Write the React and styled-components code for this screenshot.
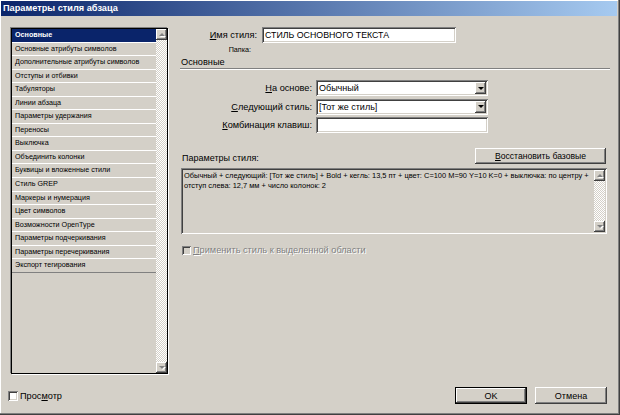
import styled, { createGlobalStyle } from 'styled-components';

const GlobalStyle = createGlobalStyle`
  html, body { margin: 0; padding: 0; background: #d4d0c8; }
  body { font-family: "Liberation Sans", Arial, sans-serif; color: #000; }
`;

const raised = `box-shadow: inset -1px -1px 0 #404040, inset 1px 1px 0 #fff, inset -2px -2px 0 #808080, inset 2px 2px 0 #d4d0c8;`;
const sunken = `box-shadow: inset 1px 1px 0 #808080, inset -1px -1px 0 #fff, inset 2px 2px 0 #404040, inset -2px -2px 0 #d4d0c8;`;

const Window = styled.div`
  width: 620px;
  height: 415px;
  box-sizing: border-box;
  padding: 1px 3px 3px 1px;
  background: #d4d0c8;
  box-shadow: inset -1px -1px 0 #404040, inset -2px -2px 0 #808080, inset 1px 1px 0 #fff;
  display: flex;
  flex-direction: column;
`;

const TitleBar = styled.div`
  height: 15px;
  padding-left: 2px;
  background: linear-gradient(to right, #0a246a, #a6caf0);
  color: #fff;
  font-weight: bold;
  font-size: 9.2px;
  line-height: 15px;
  white-space: nowrap;
`;

const Body = styled.div`
  display: flex;
  padding: 12px 0 0 10px;
`;

const ListBox = styled.div`
  width: 157px;
  height: 346px;
  box-sizing: border-box;
  border: 1px solid #000;
  box-shadow: -1px -1px 0 #808080, 1px 1px 0 #fff;
  background: #d4d0c8;
  display: flex;
`;

const Items = styled.div`
  flex: 1;
  display: flex;
  flex-direction: column;
  min-width: 0;
`;

const Item = styled.div`
  height: 13.55px;
  flex-shrink: 0;
  box-sizing: border-box;
  padding-left: 3px;
  border-bottom: 1px solid ${p => (p.$last ? '#808080' : '#fff')};
  background: ${p => (p.$selected ? '#0a246a' : 'transparent')};
  color: ${p => (p.$selected ? '#fff' : '#000')};
  font-weight: ${p => (p.$selected ? 'bold' : 'normal')};
  font-size: 7.2px;
  line-height: 12.5px;
  white-space: nowrap;
  overflow: hidden;
`;

const ScrollBar = styled.div`
  width: 11px;
  flex-shrink: 0;
  display: flex;
  flex-direction: column;
  justify-content: space-between;
  background: repeating-conic-gradient(#fff 0 25%, #d4d0c8 0 50%) 0 0 / 2px 2px;
`;

const ArrowBtn = styled.div`
  width: ${p => p.$w || 11}px;
  height: ${p => p.$h || 11}px;
  flex-shrink: 0;
  background: #d4d0c8;
  ${raised}
  display: flex;
  align-items: center;
  justify-content: center;
`;

const Arrow = styled.span`
  width: 0;
  height: 0;
  border-left: 3px solid transparent;
  border-right: 3px solid transparent;
  ${p => (p.$up ? 'border-bottom' : 'border-top')}: 3px solid ${p => (p.$off ? '#808080' : '#000')};
  filter: ${p => (p.$off ? 'drop-shadow(1px 1px 0 #fff)' : 'none')};
`;

const Content = styled.div`
  width: 430px;
  margin-left: 12px;
  margin-top: -1px;
  display: flex;
  flex-direction: column;
  font-size: 9px;
`;

const NameGrid = styled.div`
  display: grid;
  grid-template-columns: 77px 194px;
  column-gap: 5px;
  align-items: center;
`;

const Label = styled.div`
  text-align: right;
  white-space: nowrap;
  font-size: 9.2px;
`;

const Field = styled.div`
  height: 16px;
  box-sizing: border-box;
  background: #fff;
  ${sunken}
  padding: 0 3px;
  font-size: ${p => p.$size || 9}px;
  line-height: 16px;
  white-space: nowrap;
  display: flex;
  align-items: center;
  justify-content: space-between;
`;

const SelectBtn = styled(ArrowBtn)`
  margin-right: -1px;
`;

const Folder = styled.div`
  grid-column: 1;
  margin-top: 1px;
  height: 12px;
  line-height: 12px;
  padding-right: 6px;
  text-align: right;
  font-size: 7.2px;
`;

const SectionTitle = styled.div`
  height: 12px;
  line-height: 12px;
  padding-left: 1px;
  font-size: 9.2px;
`;

const Divider = styled.div`
  height: 0;
  border-top: 1px solid #808080;
  border-bottom: 1px solid #fff;
`;

const FormGrid = styled.div`
  margin-top: 10px;
  display: grid;
  grid-template-columns: 132px 172px;
  column-gap: 4px;
  row-gap: 2.5px;
  align-items: center;
`;

const ParamsHead = styled.div`
  margin-top: 15px;
  display: flex;
  justify-content: space-between;
  align-items: flex-end;
  padding-right: 4px;
`;

const ParamsLabel = styled.div`
  padding-left: 2px;
  line-height: 12px;
`;

const Button = styled.div`
  width: ${p => p.$w}px;
  height: ${p => p.$h || 16}px;
  box-sizing: border-box;
  background: #d4d0c8;
  ${p => (p.$default
    ? 'border: 1px solid #000; box-shadow: inset -1px -1px 0 #404040, inset 1px 1px 0 #fff, inset -2px -2px 0 #808080;'
    : raised)}
  display: flex;
  align-items: center;
  justify-content: center;
  font-size: ${p => p.$size || 9}px;
  white-space: nowrap;
`;

const TextBox = styled.div`
  margin-top: 4px;
  margin-left: 1px;
  width: 426px;
  height: 66px;
  box-sizing: border-box;
  padding: 2px;
  ${sunken}
  display: flex;
`;

const TextBody = styled.div`
  flex: 1;
  padding: 1px 0 0 1px;
  font-size: 7.45px;
  line-height: 10px;
  white-space: nowrap;
  overflow: hidden;
`;

const CheckRow = styled.div`
  margin-top: 11px;
  padding-left: 2px;
  display: flex;
  align-items: center;
  gap: 2px;
  color: ${p => (p.$disabled ? '#808080' : '#000')};
  text-shadow: ${p => (p.$disabled ? '1px 1px 0 #fff' : 'none')};
  font-size: 9.2px;
`;

const CheckBox = styled.span`
  width: ${p => p.$size}px;
  height: ${p => p.$size}px;
  box-sizing: border-box;
  background: ${p => (p.$disabled ? '#d4d0c8' : '#fff')};
  ${sunken}
  flex-shrink: 0;
`;

const Footer = styled.div`
  margin-top: 13px;
  height: 17px;
  padding: 0 10px 0 7px;
  display: flex;
  align-items: center;
  gap: 8px;
`;

const Preview = styled(CheckRow)`
  margin-top: 0;
  padding-left: 0;
  margin-right: auto;
`;

const items = [
  'Основные',
  'Основные атрибуты символов',
  'Дополнительные атрибуты символов',
  'Отступы и отбивки',
  'Табуляторы',
  'Линии абзаца',
  'Параметры удержания',
  'Переносы',
  'Выключка',
  'Объединить колонки',
  'Буквицы и вложенные стили',
  'Стиль GREP',
  'Маркеры и нумерация',
  'Цвет символов',
  'Возможности OpenType',
  'Параметры подчеркивания',
  'Параметры перечеркивания',
  'Экспорт тегирования',
];

const Scroll = () => (
  <ScrollBar>
    <ArrowBtn><Arrow $up $off /></ArrowBtn>
    <ArrowBtn><Arrow $off /></ArrowBtn>
  </ScrollBar>
);

const Select = ({ children }) => (
  <Field>
    <span>{children}</span>
    <SelectBtn $w={11} $h={12}><Arrow /></SelectBtn>
  </Field>
);

export default function App() {
  return (
    <>
      <GlobalStyle />
      <Window>
        <TitleBar>Параметры стиля абзаца</TitleBar>
        <Body>
          <ListBox>
            <Items>
              {items.map((it, i) => (
                <Item key={it} $selected={i === 0} $last={i === items.length - 1}>{it}</Item>
              ))}
            </Items>
            <Scroll />
          </ListBox>

          <Content>
            <NameGrid>
              <Label><u>И</u>мя стиля:</Label>
              <Field $size={8.8}>СТИЛЬ ОСНОВНОГО ТЕКСТА</Field>
              <Folder>Папка:</Folder>
            </NameGrid>
            <SectionTitle>Основные</SectionTitle>
            <Divider />

            <FormGrid>
              <Label><u>Н</u>а основе:</Label>
              <Select>Обычный</Select>
              <Label><u>С</u>ледующий стиль:</Label>
              <Select>[Тот же стиль]</Select>
              <Label><u>К</u>омбинация клавиш:</Label>
              <Field />
            </FormGrid>

            <ParamsHead>
              <ParamsLabel>Параметры стиля:</ParamsLabel>
              <Button $w={131} $size={8.6}><span><u>В</u>осстановить базовые</span></Button>
            </ParamsHead>

            <TextBox>
              <TextBody>
                Обычный + следующий: [Тот же стиль] + Bold + кегль: 13,5 пт + цвет: C=100 M=90 Y=10 K=0 + выключка: по центру +
                <br />
                отступ слева: 12,7 мм + число колонок: 2
              </TextBody>
              <Scroll />
            </TextBox>

            <CheckRow $disabled>
              <CheckBox $size={9} $disabled />
              <span><u>П</u>рименить стиль к выделенной области</span>
            </CheckRow>
          </Content>
        </Body>

        <Footer>
          <Preview>
            <CheckBox $size={10} />
            <span>Прос<u>м</u>отр</span>
          </Preview>
          <Button $w={72} $h={17} $default>OK</Button>
          <Button $w={72} $h={17}>Отмена</Button>
        </Footer>
      </Window>
    </>
  );
}
